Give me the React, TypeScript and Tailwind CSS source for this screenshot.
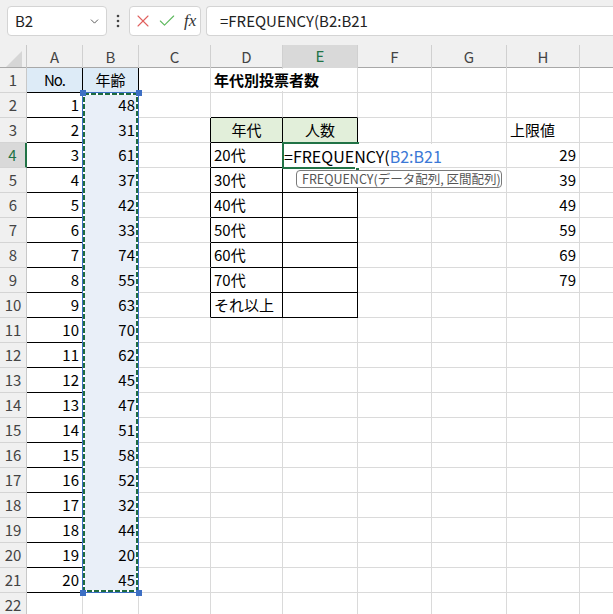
import React from 'react';
import { ChevronDown, X, Check } from 'lucide-react';

const COL_LETTERS = ['', 'A', 'B', 'C', 'D', 'E', 'F', 'G', 'H', ''];
const ROWS = Array.from({ length: 22 }, (_, i) => i + 1);
const AGES = [48, 31, 61, 37, 42, 33, 74, 55, 63, 70, 62, 45, 47, 51, 58, 52, 32, 44, 20, 45];
const LABELS = ['20代', '30代', '40代', '50代', '60代', '70代', 'それ以上'];
const LIMITS = [29, 39, 49, 59, 69, 79];

type Cell = { text?: string; align?: 'left' | 'right' | 'center'; bg?: string; bold?: boolean };

function inTable(r: number, c: number) {
  if (c >= 1 && c <= 2 && r >= 1 && r <= 21) return true;
  if (c >= 4 && c <= 5 && r >= 3 && r <= 10) return true;
  return false;
}

function getCell(r: number, c: number): Cell {
  if (r === 1 && c === 1) return { text: 'No.', align: 'center', bg: 'bg-[#ddebf7]' };
  if (r === 1 && c === 2) return { text: '年齢', align: 'center', bg: 'bg-[#ddebf7]' };
  if (r >= 2 && r <= 21 && c === 1) return { text: String(r - 1), align: 'right' };
  if (r >= 2 && r <= 21 && c === 2) return { text: String(AGES[r - 2]), align: 'right', bg: 'bg-[#e9eff8]' };
  if (r === 1 && c === 4) return { text: '年代別投票者数', align: 'left', bold: true };
  if (r === 3 && c === 4) return { text: '年代', align: 'center', bg: 'bg-[#e2efda]' };
  if (r === 3 && c === 5) return { text: '人数', align: 'center', bg: 'bg-[#e2efda]' };
  if (r >= 4 && r <= 10 && c === 4) return { text: LABELS[r - 4], align: 'left' };
  if (r === 3 && c === 8) return { text: '上限値', align: 'left' };
  if (r >= 4 && r <= 9 && c === 8) return { text: String(LIMITS[r - 4]), align: 'right' };
  return {};
}

function GridCell({ r, c }: { r: number; c: number }) {
  if (c === 0) {
    const active = r === 4;
    return (
      <div
        className={`flex items-center justify-center border-b border-b-[#d4d4d4] text-[15px] ${
          active ? 'bg-[#d9d9d9] text-[#217346] border-r-2 border-r-[#217346]' : 'bg-[#f0f0f0] text-[#444] border-r border-r-[#c8c8c8]'
        }`}
      >
        {r}
      </div>
    );
  }
  const cell = getCell(r, c);
  const rightBlack = inTable(r, c) || inTable(r, c + 1);
  let bottomCls = inTable(r, c) || inTable(r + 1, c) ? 'border-b-black' : 'border-b-[#dadada]';
  if (c === 2 && r >= 2 && r <= 20) bottomCls = 'border-b-[#e9eff8]';
  const rightCls = rightBlack ? 'border-r-black' : 'border-r-[#dadada]';
  const alignCls = cell.align === 'right' ? 'justify-end pr-[3px]' : cell.align === 'center' ? 'justify-center' : 'justify-start pl-[3px]';
  return (
    <div className={`relative flex items-center border-r border-b ${rightCls} ${bottomCls} ${cell.bg ?? 'bg-white'} ${alignCls} text-[15px] text-black`}>
      {cell.text && (
        <span className={`relative z-10 whitespace-nowrap ${cell.bold ? 'font-bold bg-white' : ''} ${cell.text === 'No.' ? 'tracking-[-1px]' : ''}`}>
          {cell.text}
        </span>
      )}
    </div>
  );
}

function TopBar() {
  return (
    <div className="h-[36px] bg-[#f0f0f0] flex items-end pl-[7px]">
      <div className="w-[100px] h-[30px] bg-white border border-[#d4d4d4] rounded-[4px] flex items-center justify-between pl-[7px] pr-[5px]">
        <span className="text-[15px] text-[#222]">B2</span>
        <ChevronDown size={13} strokeWidth={1.6} className="text-[#444]" />
      </div>
      <div className="w-[22px] h-[30px] flex items-center justify-center">
        <svg width="4" height="14" viewBox="0 0 4 14">
          <circle cx="2" cy="2" r="1.3" fill="#444" />
          <circle cx="2" cy="7" r="1.3" fill="#444" />
          <circle cx="2" cy="12" r="1.3" fill="#444" />
        </svg>
      </div>
      <div className="w-[72px] h-[30px] bg-white border border-[#d4d4d4] rounded-[4px] flex items-center pl-[3px] gap-[4px]">
        <X size={20} strokeWidth={1.3} className="text-[#e0605e]" />
        <Check size={20} strokeWidth={1.3} className="text-[#5cb85c]" />
        <span className="ml-[3px] font-['Liberation_Serif',serif] italic text-[17px] text-[#333] leading-none -mt-[2px]">fx</span>
      </div>
      <div className="ml-[5px] flex-1 h-[30px] bg-white border border-r-0 border-[#d4d4d4] rounded-l-[4px] flex items-center pl-[13px]">
        <span className="text-[15px] text-[#222] whitespace-nowrap">=FREQUENCY(B2:B21</span>
      </div>
    </div>
  );
}

function HeaderRow() {
  return (
    <div className="grid grid-cols-[27px_56px_56px_72px_72px_75px_74px_75px_73px_60px] h-[32px] bg-[#f0f0f0] border-b border-b-[#a8a8a8]">
      {COL_LETTERS.map((l, c) => {
        if (c === 0) {
          return (
            <div key={c} className="relative border-r border-r-[#c8c8c8] mt-[9px]">
              <div className="absolute right-[4px] bottom-[2px] w-0 h-0 border-l-[16px] border-l-transparent border-b-[16px] border-b-[#d6d6d6]" />
            </div>
          );
        }
        const active = c === 5;
        return (
          <div key={c} className="flex flex-col">
            <div className="h-[9px]" />
            <div
              className={`flex-1 flex items-center justify-center text-[15px] border-r border-r-[#d0d0d0] ${
                active ? 'bg-[#d9d9d9] text-[#217346] border-b-2 border-b-[#217346] -mb-[1px]' : 'text-[#444]'
              }`}
            >
              {l}
            </div>
          </div>
        );
      })}
    </div>
  );
}

export default function App() {
  return (
    <div className="relative w-[613px] h-[614px] overflow-hidden bg-white font-['Noto_Sans_CJK_JP','Noto_Sans',sans-serif]">
      <TopBar />
      <HeaderRow />
      <div className="grid grid-cols-[27px_56px_56px_72px_72px_75px_74px_75px_73px_60px] auto-rows-[25px]">
        {ROWS.map((r) => COL_LETTERS.map((_, c) => <GridCell key={`${r}-${c}`} r={r} c={c} />))}
      </div>

      {/* referenced range B2:B21 */}
      <svg className="absolute left-[80px] top-[90px] z-20" width="62" height="506">
        <rect x="2.5" y="2.5" width="56" height="500" fill="none" stroke="#3d6fc4" strokeWidth="1" />
        <rect x="4" y="4" width="53" height="497" fill="none" stroke="#ffffff" strokeWidth="2" />
        <rect x="4" y="4" width="53" height="497" fill="none" stroke="#1e6b3f" strokeWidth="2" strokeDasharray="5 2" />
        <rect x="0" y="0" width="6" height="6" fill="#3d6fc4" />
        <rect x="56" y="0" width="6" height="6" fill="#3d6fc4" />
        <rect x="0" y="500" width="6" height="6" fill="#3d6fc4" />
        <rect x="56" y="500" width="6" height="6" fill="#3d6fc4" />
      </svg>

      {/* cell editor E4 */}
      <div className="absolute left-[282px] top-[142px] w-[77px] h-[27px] border-2 border-[#217346] z-30" />
      <div className="absolute left-[284px] top-[144px] h-[23px] w-[158px] bg-white z-40 flex items-center text-[16px] whitespace-nowrap">
        <span className="text-black">=FREQUENCY(</span>
        <span className="text-[#3b78d6]">B2:B21</span>
        <span className="ml-[1px] w-[2px] h-[19px] bg-black" />
      </div>
      <div className="absolute left-[355px] top-[167px] w-[5px] h-[5px] bg-[#217346] border border-white z-30" />

      {/* function tooltip */}
      <div className="absolute left-[296px] top-[170px] w-[206px] h-[18px] bg-white border border-[#7a7a7a] rounded-[4px] z-30 flex items-center pl-[5px] text-[12.5px] text-[#555] whitespace-nowrap">
        FREQUENCY(データ配列, 区間配列)
      </div>
    </div>
  );
}
